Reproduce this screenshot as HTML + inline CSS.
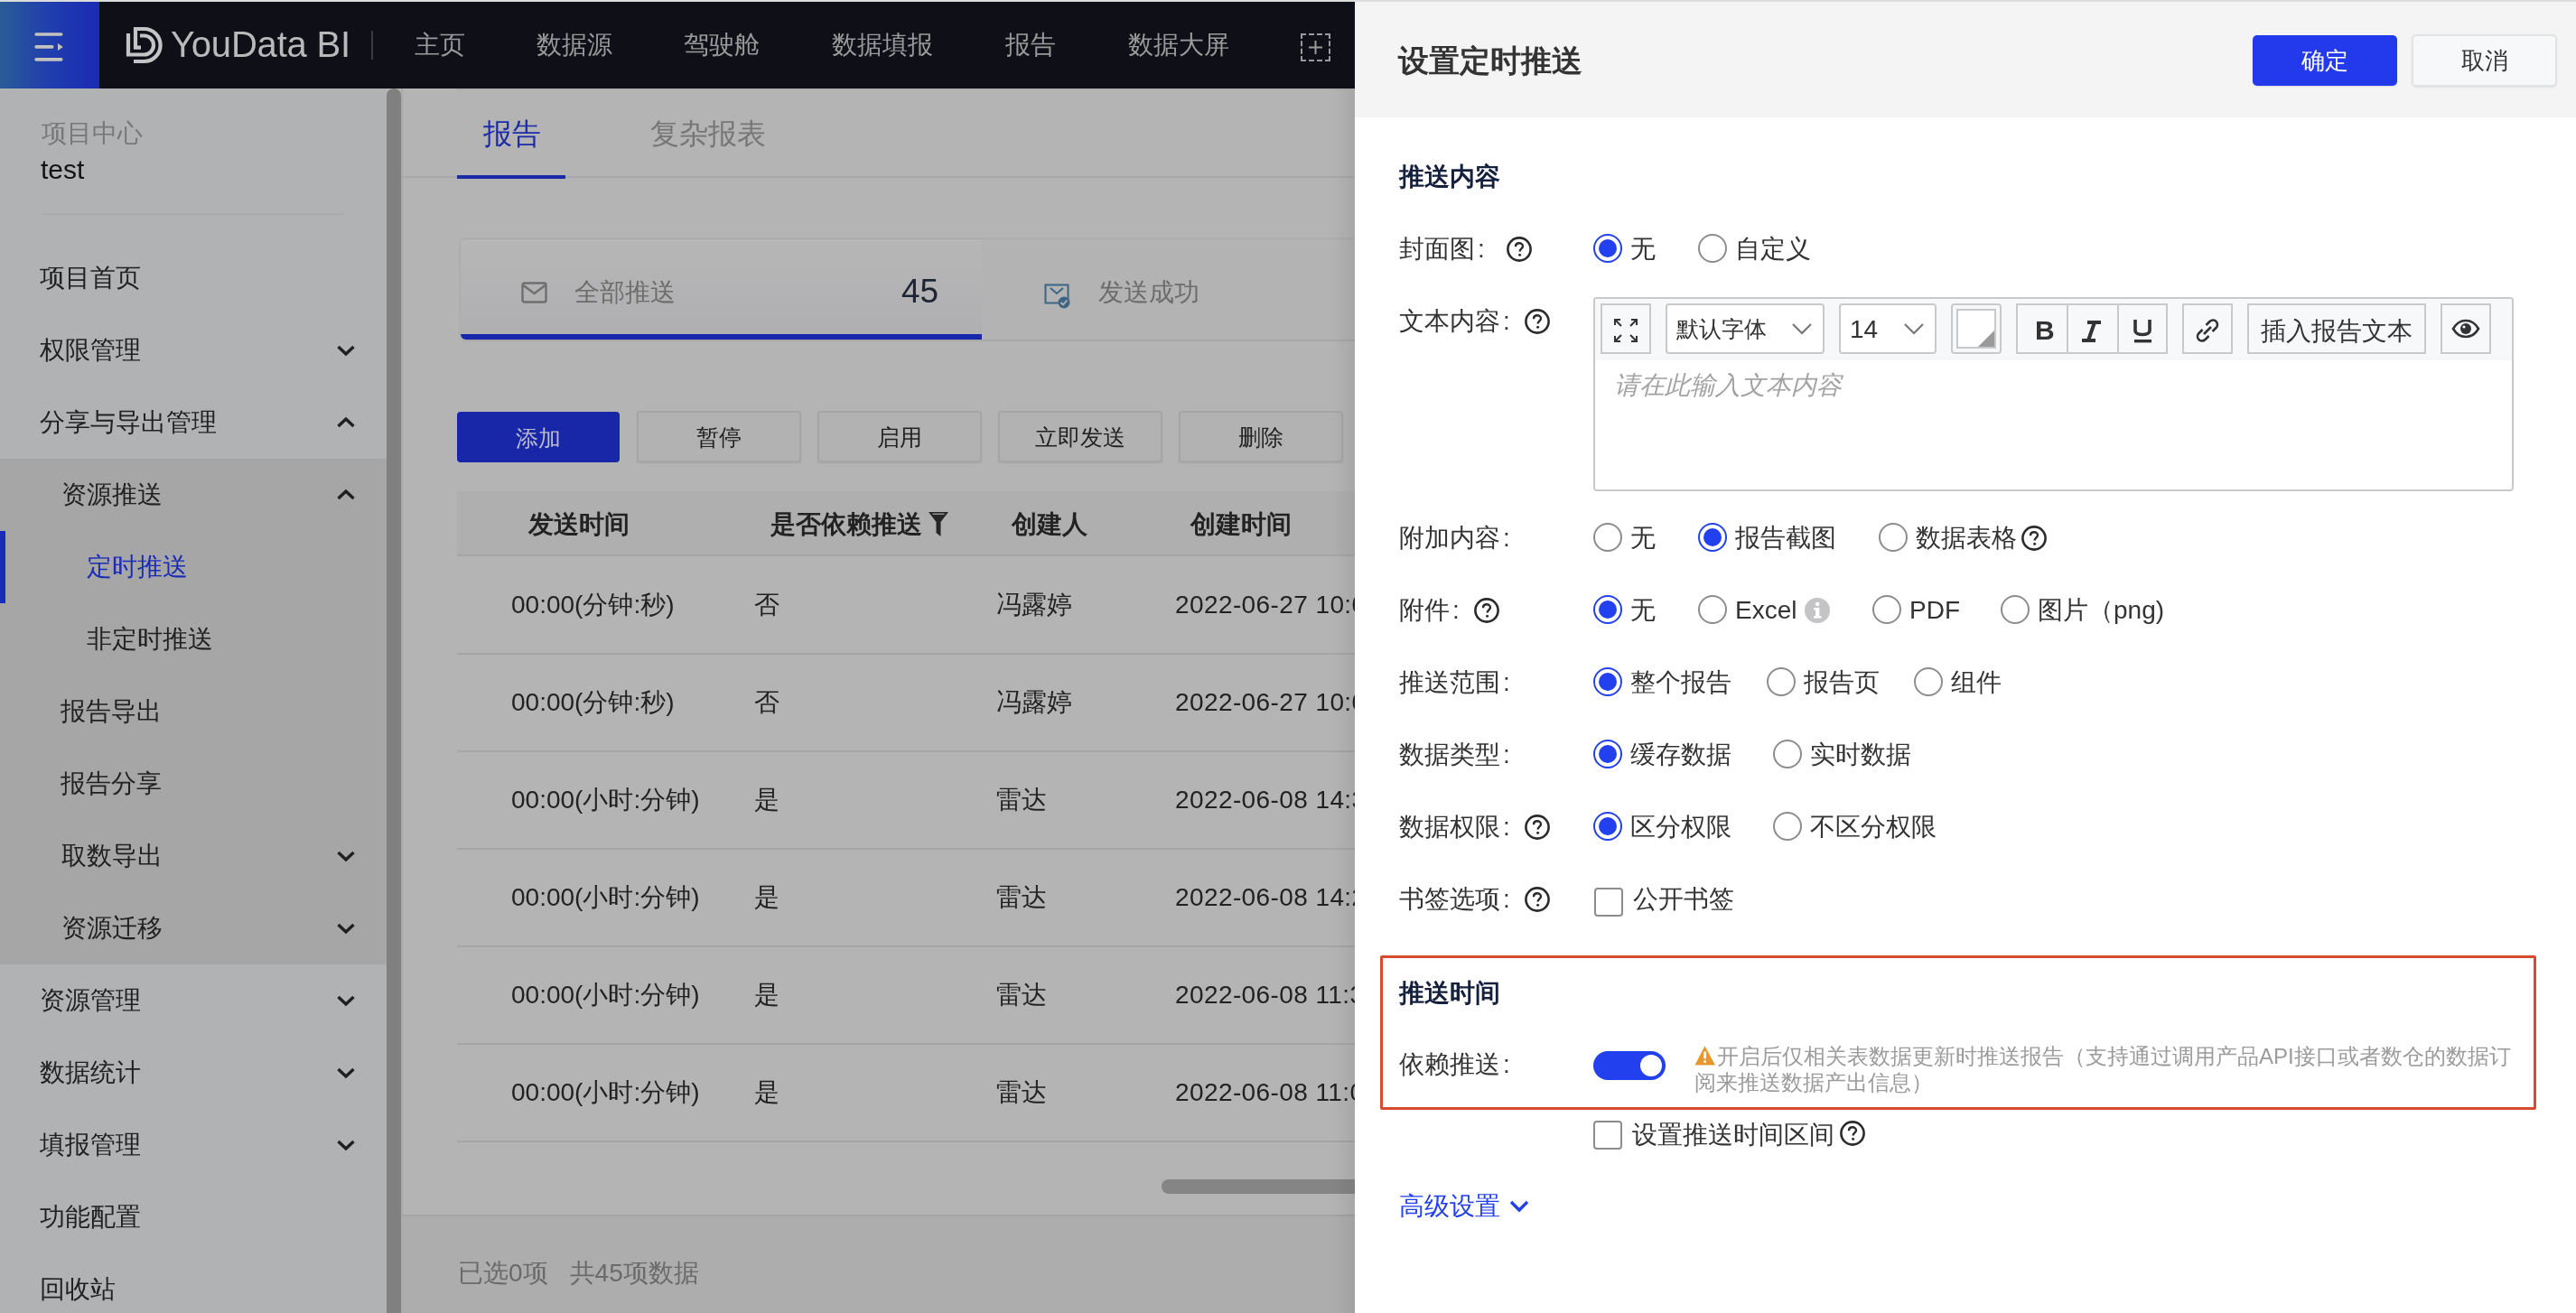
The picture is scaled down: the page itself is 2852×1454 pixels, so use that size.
<!DOCTYPE html>
<html><head><meta charset="utf-8">
<style>
html{-webkit-font-smoothing:antialiased}

*{box-sizing:border-box;margin:0;padding:0}
html,body{width:2852px;height:1454px;overflow:hidden;will-change:transform;background:#b3b3b4;font-family:"Liberation Sans",sans-serif}
.a{position:absolute;white-space:nowrap}
#topstrip{position:absolute;left:0;top:0;width:2852px;height:2px;background:#dcdcde}
#nav{position:absolute;left:0;top:2px;width:1500px;height:96px;background:#0f1017}
#burger{position:absolute;left:0;top:2px;width:110px;height:96px;background:linear-gradient(90deg,#2a5c96 0%,#2140ad 45%,#1a2ab4 100%)}
.navi{position:absolute;top:0;height:96px;line-height:96px;font-size:28px;color:#9a9a9c}
#side{position:absolute;left:0;top:98px;width:428px;height:1356px;background:#b1b2b4}
#sub{position:absolute;left:0;top:508px;width:428px;height:560px;background:#a6a6a7}
.mi{position:absolute;font-size:28px;color:#212121;line-height:40px;height:40px}
.chev{position:absolute;left:372px;width:22px;height:22px}
#sbar{position:absolute;left:428px;top:98px;width:16px;height:1356px;background:#808081;border-radius:8px 8px 0 0}
#content{position:absolute;left:444px;top:98px;width:1056px;height:1356px;background:#b4b4b4;border-left:2px solid #a9a9a9}
#panel{position:absolute;left:1500px;top:2px;width:1352px;height:1452px;background:#fff}
#phead{position:absolute;left:0;top:0;width:1352px;height:127px;background:#f4f4f4}
.lbl{position:absolute;left:49px;font-size:28px;color:#333;line-height:40px;height:40px}
.sect{position:absolute;left:49px;font-size:28px;font-weight:bold;color:#14213d;line-height:40px}
.radio{position:absolute;width:31px;height:31px;border-radius:50%;border:2px solid #8a8a8a;background:#fff}
.radio.on{border:3px solid #2439eb}
.radio.on::after{content:"";position:absolute;left:3px;top:3px;width:19px;height:19px;border-radius:50%;background:#2439eb}
.rt{position:absolute;font-size:28px;color:#333;line-height:40px}
.q{position:absolute;width:27px;height:27px;border-radius:50%;border:2.5px solid #2a2a2a;font-size:19px;line-height:22px;text-align:center;color:#2a2a2a;font-weight:bold}
.btn{position:absolute;top:455px;width:182px;height:57px;border-radius:4px;background:#b2b2b3;border:2px solid #a6a6a7;box-shadow:0 1px 2px rgba(0,0,0,0.08);color:#222;font-size:25px;line-height:55px;text-align:center}
.th{position:absolute;top:561px;font-size:28px;line-height:40px;font-weight:bold;color:#222}
.td{position:absolute;font-size:28px;line-height:40px;color:#222;white-space:nowrap}
.cb{position:absolute;width:31px;height:31px;border:2px solid #8a8a8a;border-radius:4px;background:#fff}
</style></head><body>
<div id="topstrip"></div>
<div id="nav"></div>
<div id="burger"><svg width="110" height="96" style="position:absolute;left:0;top:0"><g fill="#c4c2bd"><rect x="38.3" y="34.2" width="31.2" height="3.6" rx="1.8"/><rect x="38.3" y="48.1" width="21.2" height="3.6" rx="1.8"/><path d="M64,46 L69.8,50 L64,54 Z"/><rect x="38.3" y="62.1" width="31.2" height="3.6" rx="1.8"/></g></svg></div>
<svg style="position:absolute;left:0;top:0" width="200" height="98"><g fill="none" stroke="#c4c4c6" stroke-width="4.2"><path d="M156,52.7 H150 V32 H159.6 A18,18 0 0 1 159.6,68 H148"/><path d="M155,39.5 H159.5 A10.5,10.5 0 0 1 159.5,60.5 H142 V37"/></g></svg>
<div class="a" style="left:189px;top:26px;font-size:40px;line-height:46px;color:#b9b9bb;letter-spacing:-0.2px">YouData BI</div>
<div style="position:absolute;left:411px;top:34px;width:2px;height:32px;background:#3a3b42"></div>
<div class="navi" style="left:459px;top:2px">主页</div>
<div class="navi" style="left:594px;top:2px">数据源</div>
<div class="navi" style="left:757px;top:2px">驾驶舱</div>
<div class="navi" style="left:921px;top:2px">数据填报</div>
<div class="navi" style="left:1113px;top:2px">报告</div>
<div class="navi" style="left:1249px;top:2px">数据大屏</div>
<div style="position:absolute;left:1440px;top:37px;width:33px;height:31px;border:2px dashed #9a9a9c"></div>
<svg style="position:absolute;left:1440px;top:37px" width="33" height="31"><path d="M16.5,8 V23 M9,15.5 H24" stroke="#9a9a9c" stroke-width="2"/></svg>

<div id="side"></div>
<div id="sub"></div>
<div class="mi" style="left:46px;top:128px;color:#787879">项目中心</div>
<div class="mi" style="left:45px;top:168px;color:#141414;font-size:30px">test</div>
<div style="position:absolute;left:46px;top:236px;width:334px;height:2px;background:#a9aaac"></div>
<div style="position:absolute;left:0;top:588px;width:6px;height:80px;background:#1a2cb5"></div>
<div class="mi" style="left:44px;top:288px;color:#212121">项目首页</div>
<div class="mi" style="left:44px;top:368px;color:#212121">权限管理</div>
<svg class="chev" style="top:377px" width="22" height="22"><path d="M2.5,7 L11,15 L19.5,7" fill="none" stroke="#1f1f1f" stroke-width="3.4"/></svg>
<div class="mi" style="left:44px;top:448px;color:#212121">分享与导出管理</div>
<svg class="chev" style="top:457px" width="22" height="22"><path d="M2.5,15 L11,7 L19.5,15" fill="none" stroke="#1f1f1f" stroke-width="3.4"/></svg>
<div class="mi" style="left:68px;top:528px;color:#212121">资源推送</div>
<svg class="chev" style="top:537px" width="22" height="22"><path d="M2.5,15 L11,7 L19.5,15" fill="none" stroke="#1f1f1f" stroke-width="3.4"/></svg>
<div class="mi" style="left:96px;top:608px;color:#1a2cb5">定时推送</div>
<div class="mi" style="left:96px;top:688px;color:#212121">非定时推送</div>
<div class="mi" style="left:67px;top:768px;color:#212121">报告导出</div>
<div class="mi" style="left:67px;top:848px;color:#212121">报告分享</div>
<div class="mi" style="left:68px;top:928px;color:#212121">取数导出</div>
<svg class="chev" style="top:937px" width="22" height="22"><path d="M2.5,7 L11,15 L19.5,7" fill="none" stroke="#1f1f1f" stroke-width="3.4"/></svg>
<div class="mi" style="left:68px;top:1008px;color:#212121">资源迁移</div>
<svg class="chev" style="top:1017px" width="22" height="22"><path d="M2.5,7 L11,15 L19.5,7" fill="none" stroke="#1f1f1f" stroke-width="3.4"/></svg>
<div class="mi" style="left:44px;top:1088px;color:#212121">资源管理</div>
<svg class="chev" style="top:1097px" width="22" height="22"><path d="M2.5,7 L11,15 L19.5,7" fill="none" stroke="#1f1f1f" stroke-width="3.4"/></svg>
<div class="mi" style="left:44px;top:1168px;color:#212121">数据统计</div>
<svg class="chev" style="top:1177px" width="22" height="22"><path d="M2.5,7 L11,15 L19.5,7" fill="none" stroke="#1f1f1f" stroke-width="3.4"/></svg>
<div class="mi" style="left:44px;top:1248px;color:#212121">填报管理</div>
<svg class="chev" style="top:1257px" width="22" height="22"><path d="M2.5,7 L11,15 L19.5,7" fill="none" stroke="#1f1f1f" stroke-width="3.4"/></svg>
<div class="mi" style="left:44px;top:1328px;color:#212121">功能配置</div>
<div class="mi" style="left:44px;top:1408px;color:#212121">回收站</div>
<div id="sbar"></div>

<div id="content"></div>
<div style="position:absolute;left:506px;top:98px;width:994px;height:2px;background:#aeaeaf"></div>
<div style="position:absolute;left:446px;top:195px;width:1054px;height:2px;background:#a8a8a9"></div>
<div class="a" style="left:535px;top:126px;font-size:32px;line-height:44px;color:#1a2aa8">报告</div>
<div style="position:absolute;left:506px;top:194px;width:120px;height:4px;background:#1a2aa8"></div>
<div class="a" style="left:720px;top:126px;font-size:32px;line-height:44px;color:#767677">复杂报表</div>

<div style="position:absolute;left:510px;top:264px;width:1000px;height:112px;border-radius:6px;background:#b3b3b4;border-top:1px solid #a9a9aa;box-shadow:0 1px 3px rgba(0,0,0,0.12)"></div>
<div style="position:absolute;left:510px;top:265px;width:577px;height:111px;border-radius:6px 0 0 6px;background:linear-gradient(180deg,#b6b6b7 0%,#afafb1 100%);overflow:hidden"><div style="position:absolute;left:0;bottom:0;width:577px;height:6px;background:#1727ad"></div></div>
<svg style="position:absolute;left:577px;top:312px" width="30" height="26"><rect x="1.5" y="1.5" width="26" height="21" rx="2" fill="none" stroke="#6f6f70" stroke-width="2.4"/><path d="M2.5,4 L14.5,13 L26.5,4" fill="none" stroke="#6f6f70" stroke-width="2.4"/></svg>
<div class="a" style="left:636px;top:304px;font-size:28px;line-height:40px;color:#6c6c6d">全部推送</div>
<div class="a" style="left:998px;top:301px;font-size:37px;line-height:44px;color:#1e2433">45</div>
<svg style="position:absolute;left:1156px;top:314px" width="32" height="28"><rect x="1.5" y="1.5" width="25" height="20" fill="none" stroke="#3c6483" stroke-width="2"/><path d="M7,5 L14,11 L21,5" fill="none" stroke="#3c6483" stroke-width="2"/><circle cx="22" cy="21" r="6.5" fill="#3c6483"/><path d="M18.5,21 L21,23.5 L25.5,18.5" fill="none" stroke="#b4b4b5" stroke-width="1.8"/></svg>
<div class="a" style="left:1216px;top:304px;font-size:28px;line-height:40px;color:#6c6c6d">发送成功</div>

<div style="position:absolute;left:506px;top:456px;width:180px;height:56px;border-radius:4px;background:#1727a8;color:#b9bccc;font-size:25px;line-height:58px;text-align:center">添加</div>
<div class="btn" style="left:705px">暂停</div>
<div class="btn" style="left:905px">启用</div>
<div class="btn" style="left:1105px">立即发送</div>
<div class="btn" style="left:1305px">删除</div>

<div style="position:absolute;left:506px;top:544px;width:994px;height:72px;background:#afafb0;border-bottom:2px solid #a5a5a6"></div>
<div class="th" style="left:585px">发送时间</div>
<div class="th" style="left:853px">是否依赖推送</div>
<svg style="position:absolute;left:1027px;top:566px" width="24" height="30"><path d="M1,1 H23 L14.5,12 V28 L9.5,24 V12 Z" fill="#262626"/><path d="M5.5,3.2 H18.5" stroke="#9a9a9b" stroke-width="1.4"/></svg>
<div class="th" style="left:1120px">创建人</div>
<div class="th" style="left:1318px">创建时间</div>
<div class="td" style="left:566px;top:650px">00:00(分钟:秒)</div><div class="td" style="left:835px;top:650px">否</div><div class="td" style="left:1103px;top:650px">冯露婷</div><div class="td" style="left:1301px;top:650px;letter-spacing:0.4px">2022-06-27 10:0</div>
<div style="position:absolute;left:506px;top:723px;width:994px;height:2px;background:#a6a6a7"></div>
<div class="td" style="left:566px;top:758px">00:00(分钟:秒)</div><div class="td" style="left:835px;top:758px">否</div><div class="td" style="left:1103px;top:758px">冯露婷</div><div class="td" style="left:1301px;top:758px;letter-spacing:0.4px">2022-06-27 10:0</div>
<div style="position:absolute;left:506px;top:831px;width:994px;height:2px;background:#a6a6a7"></div>
<div class="td" style="left:566px;top:866px">00:00(小时:分钟)</div><div class="td" style="left:835px;top:866px">是</div><div class="td" style="left:1103px;top:866px">雷达</div><div class="td" style="left:1301px;top:866px;letter-spacing:0.4px">2022-06-08 14:3</div>
<div style="position:absolute;left:506px;top:939px;width:994px;height:2px;background:#a6a6a7"></div>
<div class="td" style="left:566px;top:974px">00:00(小时:分钟)</div><div class="td" style="left:835px;top:974px">是</div><div class="td" style="left:1103px;top:974px">雷达</div><div class="td" style="left:1301px;top:974px;letter-spacing:0.4px">2022-06-08 14:2</div>
<div style="position:absolute;left:506px;top:1047px;width:994px;height:2px;background:#a6a6a7"></div>
<div class="td" style="left:566px;top:1082px">00:00(小时:分钟)</div><div class="td" style="left:835px;top:1082px">是</div><div class="td" style="left:1103px;top:1082px">雷达</div><div class="td" style="left:1301px;top:1082px;letter-spacing:0.4px">2022-06-08 11:3</div>
<div style="position:absolute;left:506px;top:1155px;width:994px;height:2px;background:#a6a6a7"></div>
<div class="td" style="left:566px;top:1190px">00:00(小时:分钟)</div><div class="td" style="left:835px;top:1190px">是</div><div class="td" style="left:1103px;top:1190px">雷达</div><div class="td" style="left:1301px;top:1190px;letter-spacing:0.4px">2022-06-08 11:0</div>
<div style="position:absolute;left:506px;top:1263px;width:994px;height:2px;background:#a6a6a7"></div>
<div style="position:absolute;left:1286px;top:1306px;width:240px;height:16px;border-radius:8px;background:#858586"></div>
<div style="position:absolute;left:446px;top:1345px;width:1054px;height:2px;background:#a3a3a4"></div>
<div style="position:absolute;left:446px;top:1347px;width:1054px;height:107px;background:#adadae"></div>
<div class="a" style="left:507px;top:1390px;font-size:28px;line-height:40px;color:#6a6a6b">已选0项<span style="margin-left:24px">共45项数据</span></div>

<!--PANEL-->
<div style="position:absolute;left:1500px;top:2px;width:1352px;height:1452px;background:#fff"></div>
<div style="position:absolute;left:1500px;top:2px;width:1352px;height:128px;background:#f4f4f4"></div>
<div class="a" style="left:1548px;top:47px;font-size:34px;line-height:40px;color:#333;font-weight:bold">设置定时推送</div>
<div style="position:absolute;left:2494px;top:39px;width:160px;height:56px;border-radius:5px;background:#2339ec;box-shadow:0 1px 2px rgba(0,0,0,0.1);color:#fff;font-size:26px;line-height:56px;text-align:center">确定</div>
<div style="position:absolute;left:2670px;top:38px;width:161px;height:58px;border-radius:5px;background:#f7f8fa;border:2px solid #e2e2e4;box-shadow:0 1px 2px rgba(0,0,0,0.08);color:#333;font-size:26px;line-height:54px;text-align:center">取消</div>
<div class="a" style="left:1549px;top:176px;font-size:28px;line-height:40px;color:#14203d;font-weight:bold">推送内容</div>
<div class="a" style="left:1549px;top:256px;font-size:28px;line-height:40px;color:#333;">封面图<span style="margin-left:3px">:</span></div>
<svg style="position:absolute;left:1667px;top:261px" width="30" height="30"><circle cx="15" cy="15" r="12.6" fill="none" stroke="#2b2b2b" stroke-width="2.6"/><path d="M11,12.2 C11,9.6 12.8,8.3 15,8.3 C17.3,8.3 19,9.8 19,11.8 C19,14.4 15.6,14.6 15.6,17.6" fill="none" stroke="#2b2b2b" stroke-width="2.4"/><circle cx="15.6" cy="21.3" r="1.5" fill="#2b2b2b"/></svg>
<div style="position:absolute;left:1764px;top:259px;width:32px;height:32px;border-radius:50%;border:2.5px solid #2340ee;background:#fff"><div style="position:absolute;left:3.5px;top:3.5px;width:20px;height:20px;border-radius:50%;background:#2340ee"></div></div>
<div class="a" style="left:1805px;top:256px;font-size:28px;line-height:40px;color:#333;">无</div>
<div style="position:absolute;left:1880px;top:259px;width:32px;height:32px;border-radius:50%;border:2px solid #8c8c8c;background:#fff"></div>
<div class="a" style="left:1921px;top:256px;font-size:28px;line-height:40px;color:#333;">自定义</div>
<div class="a" style="left:1549px;top:336px;font-size:28px;line-height:40px;color:#333;">文本内容<span style="margin-left:3px">:</span></div>
<svg style="position:absolute;left:1687px;top:341px" width="30" height="30"><circle cx="15" cy="15" r="12.6" fill="none" stroke="#2b2b2b" stroke-width="2.6"/><path d="M11,12.2 C11,9.6 12.8,8.3 15,8.3 C17.3,8.3 19,9.8 19,11.8 C19,14.4 15.6,14.6 15.6,17.6" fill="none" stroke="#2b2b2b" stroke-width="2.4"/><circle cx="15.6" cy="21.3" r="1.5" fill="#2b2b2b"/></svg>
<div style="position:absolute;left:1764px;top:329px;width:1019px;height:215px;border:2px solid #c9c9c9;border-radius:4px;background:#fff;overflow:hidden">
<div style="position:absolute;left:0;top:0;width:1017px;height:68px;background:#f7f8fa"></div></div>
<div style="position:absolute;left:1772px;top:336px;width:56px;height:56px;border:2px solid #c9c9c9;border-radius:0px;background:#f7f8fa"><svg style="position:absolute;left:0;top:0" width="52" height="52"><g fill="none" stroke="#333" stroke-width="2"><path d="M14,22 V16 H20 M14,16 L21,23"/><path d="M32,16 H38 V22 M38,16 L31,23"/><path d="M14,34 V40 H20 M14,40 L21,33"/><path d="M38,34 V40 H32 M38,40 L31,33"/></g></svg></div>
<div style="position:absolute;left:1844px;top:336px;width:176px;height:56px;border:2px solid #c9c9c9;border-radius:4px;background:#fff"><div class="a" style="left:10px;top:6px;font-size:25px;line-height:40px;color:#333">默认字体</div><svg style="position:absolute;left:137px;top:18px" width="24" height="18"><path d="M2,3 L12,13 L22,3" fill="none" stroke="#777" stroke-width="2.2"/></svg></div>
<div style="position:absolute;left:2036px;top:336px;width:108px;height:56px;border:2px solid #c9c9c9;border-radius:4px;background:#fff"><div class="a" style="left:10px;top:7px;font-size:28px;line-height:40px;color:#333">14</div><svg style="position:absolute;left:69px;top:18px" width="24" height="18"><path d="M2,3 L12,13 L22,3" fill="none" stroke="#777" stroke-width="2.2"/></svg></div>
<div style="position:absolute;left:2160px;top:336px;width:56px;height:56px;border:2px solid #c9c9c9;border-radius:4px;background:#f7f8fa"><div style="position:absolute;left:4px;top:4px;width:44px;height:44px;border:2px solid #c9c9c9;background:#fff"></div><svg style="position:absolute;left:4px;top:4px" width="44" height="44"><path d="M42,24 V42 H24 Z" fill="#9a9a9a"/></svg></div>
<div style="position:absolute;left:2232px;top:336px;width:168px;height:56px;border:2px solid #c9c9c9;background:#f7f8fa"><div style="position:absolute;left:54px;top:0;width:2px;height:52px;background:#c9c9c9"></div><div style="position:absolute;left:110px;top:0;width:2px;height:52px;background:#c9c9c9"></div></div>
<div class="a" style="left:2253px;top:346px;font-size:30px;line-height:40px;font-weight:bold;color:#333">B</div>
<svg style="position:absolute;left:2290px;top:336px" width="56" height="56"><path d="M21,21 H36 M15,41 H30 M29,21 L22,41" fill="none" stroke="#333" stroke-width="4"/></svg>
<svg style="position:absolute;left:2346px;top:336px" width="56" height="56"><path d="M18,18 V30 C18,36 34,36 34,30 V18" fill="none" stroke="#333" stroke-width="3.6"/><rect x="17" y="40" width="19" height="3.4" fill="#333"/></svg>
<div style="position:absolute;left:2416px;top:336px;width:56px;height:56px;border:2px solid #c9c9c9;border-radius:0px;background:#f7f8fa"><svg style="position:absolute;left:0;top:0" width="52" height="52"><g fill="none" stroke="#333" stroke-width="2.6"><path d="M24.5,22 L28.5,18 C30.5,16 34,16 35.5,17.8 C37.5,19.8 37.5,23 35.5,25 L31.5,29"/><path d="M27.5,34 L23.5,38 C21.5,40 18,40 16.5,38.2 C14.5,36.2 14.5,33 16.5,31 L20.5,27"/><path d="M22,32 L30,24"/></g></svg></div>
<div style="position:absolute;left:2488px;top:336px;width:198px;height:56px;border:2px solid #c9c9c9;border-radius:0px;background:#f7f8fa"><div class="a" style="left:13px;top:9px;font-size:28px;line-height:40px;color:#333">插入报告文本</div></div>
<div style="position:absolute;left:2702px;top:336px;width:56px;height:56px;border:2px solid #c9c9c9;border-radius:0px;background:#f7f8fa"><svg style="position:absolute;left:0;top:0" width="52" height="52"><path d="M12,26 C16,19 21,17 26,17 C31,17 36,19 40,26 C36,33 31,35 26,35 C21,35 16,33 12,26 Z" fill="none" stroke="#333" stroke-width="2.6"/><circle cx="26" cy="26" r="6" fill="#333"/><circle cx="24" cy="24" r="1.6" fill="#f7f8fa"/></svg></div>
<div class="a" style="left:1787px;top:407px;font-size:28px;line-height:40px;color:#a3a3a3;font-style:italic">请在此输入文本内容</div>
<div class="a" style="left:1549px;top:576px;font-size:28px;line-height:40px;color:#333;">附加内容<span style="margin-left:3px">:</span></div>
<div style="position:absolute;left:1764px;top:579px;width:32px;height:32px;border-radius:50%;border:2px solid #8c8c8c;background:#fff"></div>
<div class="a" style="left:1805px;top:576px;font-size:28px;line-height:40px;color:#333;">无</div>
<div style="position:absolute;left:1880px;top:579px;width:32px;height:32px;border-radius:50%;border:2.5px solid #2340ee;background:#fff"><div style="position:absolute;left:3.5px;top:3.5px;width:20px;height:20px;border-radius:50%;background:#2340ee"></div></div>
<div class="a" style="left:1921px;top:576px;font-size:28px;line-height:40px;color:#333;">报告截图</div>
<div style="position:absolute;left:2080px;top:579px;width:32px;height:32px;border-radius:50%;border:2px solid #8c8c8c;background:#fff"></div>
<div class="a" style="left:2121px;top:576px;font-size:28px;line-height:40px;color:#333;">数据表格</div>
<svg style="position:absolute;left:2237px;top:581px" width="30" height="30"><circle cx="15" cy="15" r="12.6" fill="none" stroke="#2b2b2b" stroke-width="2.6"/><path d="M11,12.2 C11,9.6 12.8,8.3 15,8.3 C17.3,8.3 19,9.8 19,11.8 C19,14.4 15.6,14.6 15.6,17.6" fill="none" stroke="#2b2b2b" stroke-width="2.4"/><circle cx="15.6" cy="21.3" r="1.5" fill="#2b2b2b"/></svg>
<div class="a" style="left:1549px;top:656px;font-size:28px;line-height:40px;color:#333;">附件<span style="margin-left:3px">:</span></div>
<svg style="position:absolute;left:1631px;top:661px" width="30" height="30"><circle cx="15" cy="15" r="12.6" fill="none" stroke="#2b2b2b" stroke-width="2.6"/><path d="M11,12.2 C11,9.6 12.8,8.3 15,8.3 C17.3,8.3 19,9.8 19,11.8 C19,14.4 15.6,14.6 15.6,17.6" fill="none" stroke="#2b2b2b" stroke-width="2.4"/><circle cx="15.6" cy="21.3" r="1.5" fill="#2b2b2b"/></svg>
<div style="position:absolute;left:1764px;top:659px;width:32px;height:32px;border-radius:50%;border:2.5px solid #2340ee;background:#fff"><div style="position:absolute;left:3.5px;top:3.5px;width:20px;height:20px;border-radius:50%;background:#2340ee"></div></div>
<div class="a" style="left:1805px;top:656px;font-size:28px;line-height:40px;color:#333;">无</div>
<div style="position:absolute;left:1880px;top:659px;width:32px;height:32px;border-radius:50%;border:2px solid #8c8c8c;background:#fff"></div>
<div class="a" style="left:1921px;top:656px;font-size:28px;line-height:40px;color:#333;">Excel</div>
<svg style="position:absolute;left:1997px;top:661px" width="30" height="30"><circle cx="15" cy="15" r="14" fill="#c4c4c6"/><rect x="13" y="12" width="4.4" height="11" fill="#fff"/><rect x="11" y="21" width="8.5" height="2.6" fill="#fff"/><rect x="11" y="12" width="4" height="2.4" fill="#fff"/><circle cx="15.2" cy="8" r="2.3" fill="#fff"/></svg>
<div style="position:absolute;left:2073px;top:659px;width:32px;height:32px;border-radius:50%;border:2px solid #8c8c8c;background:#fff"></div>
<div class="a" style="left:2114px;top:656px;font-size:28px;line-height:40px;color:#333;">PDF</div>
<div style="position:absolute;left:2215px;top:659px;width:32px;height:32px;border-radius:50%;border:2px solid #8c8c8c;background:#fff"></div>
<div class="a" style="left:2256px;top:656px;font-size:28px;line-height:40px;color:#333;">图片（png)</div>
<div class="a" style="left:1549px;top:736px;font-size:28px;line-height:40px;color:#333;">推送范围<span style="margin-left:3px">:</span></div>
<div style="position:absolute;left:1764px;top:739px;width:32px;height:32px;border-radius:50%;border:2.5px solid #2340ee;background:#fff"><div style="position:absolute;left:3.5px;top:3.5px;width:20px;height:20px;border-radius:50%;background:#2340ee"></div></div>
<div class="a" style="left:1805px;top:736px;font-size:28px;line-height:40px;color:#333;">整个报告</div>
<div style="position:absolute;left:1956px;top:739px;width:32px;height:32px;border-radius:50%;border:2px solid #8c8c8c;background:#fff"></div>
<div class="a" style="left:1997px;top:736px;font-size:28px;line-height:40px;color:#333;">报告页</div>
<div style="position:absolute;left:2119px;top:739px;width:32px;height:32px;border-radius:50%;border:2px solid #8c8c8c;background:#fff"></div>
<div class="a" style="left:2160px;top:736px;font-size:28px;line-height:40px;color:#333;">组件</div>
<div class="a" style="left:1549px;top:816px;font-size:28px;line-height:40px;color:#333;">数据类型<span style="margin-left:3px">:</span></div>
<div style="position:absolute;left:1764px;top:819px;width:32px;height:32px;border-radius:50%;border:2.5px solid #2340ee;background:#fff"><div style="position:absolute;left:3.5px;top:3.5px;width:20px;height:20px;border-radius:50%;background:#2340ee"></div></div>
<div class="a" style="left:1805px;top:816px;font-size:28px;line-height:40px;color:#333;">缓存数据</div>
<div style="position:absolute;left:1963px;top:819px;width:32px;height:32px;border-radius:50%;border:2px solid #8c8c8c;background:#fff"></div>
<div class="a" style="left:2004px;top:816px;font-size:28px;line-height:40px;color:#333;">实时数据</div>
<div class="a" style="left:1549px;top:896px;font-size:28px;line-height:40px;color:#333;">数据权限<span style="margin-left:3px">:</span></div>
<svg style="position:absolute;left:1687px;top:901px" width="30" height="30"><circle cx="15" cy="15" r="12.6" fill="none" stroke="#2b2b2b" stroke-width="2.6"/><path d="M11,12.2 C11,9.6 12.8,8.3 15,8.3 C17.3,8.3 19,9.8 19,11.8 C19,14.4 15.6,14.6 15.6,17.6" fill="none" stroke="#2b2b2b" stroke-width="2.4"/><circle cx="15.6" cy="21.3" r="1.5" fill="#2b2b2b"/></svg>
<div style="position:absolute;left:1764px;top:899px;width:32px;height:32px;border-radius:50%;border:2.5px solid #2340ee;background:#fff"><div style="position:absolute;left:3.5px;top:3.5px;width:20px;height:20px;border-radius:50%;background:#2340ee"></div></div>
<div class="a" style="left:1805px;top:896px;font-size:28px;line-height:40px;color:#333;">区分权限</div>
<div style="position:absolute;left:1963px;top:899px;width:32px;height:32px;border-radius:50%;border:2px solid #8c8c8c;background:#fff"></div>
<div class="a" style="left:2004px;top:896px;font-size:28px;line-height:40px;color:#333;">不区分权限</div>
<div class="a" style="left:1549px;top:976px;font-size:28px;line-height:40px;color:#333;">书签选项<span style="margin-left:3px">:</span></div>
<svg style="position:absolute;left:1687px;top:981px" width="30" height="30"><circle cx="15" cy="15" r="12.6" fill="none" stroke="#2b2b2b" stroke-width="2.6"/><path d="M11,12.2 C11,9.6 12.8,8.3 15,8.3 C17.3,8.3 19,9.8 19,11.8 C19,14.4 15.6,14.6 15.6,17.6" fill="none" stroke="#2b2b2b" stroke-width="2.4"/><circle cx="15.6" cy="21.3" r="1.5" fill="#2b2b2b"/></svg>
<div style="position:absolute;left:1765px;top:983px;width:32px;height:32px;border:2px solid #8c8c8c;border-radius:4px;background:#fff"></div>
<div class="a" style="left:1808px;top:976px;font-size:28px;line-height:40px;color:#333;">公开书签</div>
<div style="position:absolute;left:1528px;top:1058px;width:1280px;height:171px;border:3px solid #d94a2e;border-radius:2px"></div>
<div class="a" style="left:1549px;top:1080px;font-size:28px;line-height:40px;color:#14203d;font-weight:bold">推送时间</div>
<div class="a" style="left:1549px;top:1159px;font-size:28px;line-height:40px;color:#333;">依赖推送<span style="margin-left:3px">:</span></div>
<div style="position:absolute;left:1764px;top:1164px;width:80px;height:32px;border-radius:16px;background:#2340ee"><div style="position:absolute;left:52px;top:4px;width:24px;height:24px;border-radius:50%;background:#fff"></div></div>
<svg style="position:absolute;left:1876px;top:1157px" width="24" height="24"><path d="M11.5,1.2 L23,22.5 H0.5 Z" fill="#e8962e"/><rect x="10.3" y="7.5" width="2.6" height="8" fill="#fff"/><rect x="10.3" y="17.3" width="2.6" height="2.6" fill="#fff"/></svg>
<div class="a" style="left:1901px;top:1155px;font-size:24px;line-height:40px;color:#9b9b9b;line-height:30px">开启后仅相关表数据更新时推送报告（支持通过调用产品API接口或者数仓的数据订</div>
<div class="a" style="left:1876px;top:1184px;font-size:24px;line-height:40px;color:#9b9b9b;line-height:30px">阅来推送数据产出信息）</div>
<div style="position:absolute;left:1764px;top:1241px;width:32px;height:32px;border:2px solid #8c8c8c;border-radius:4px;background:#fff"></div>
<div class="a" style="left:1807px;top:1237px;font-size:28px;line-height:40px;color:#333;">设置推送时间区间</div>
<svg style="position:absolute;left:2036px;top:1240px" width="30" height="30"><circle cx="15" cy="15" r="12.6" fill="none" stroke="#2b2b2b" stroke-width="2.6"/><path d="M11,12.2 C11,9.6 12.8,8.3 15,8.3 C17.3,8.3 19,9.8 19,11.8 C19,14.4 15.6,14.6 15.6,17.6" fill="none" stroke="#2b2b2b" stroke-width="2.4"/><circle cx="15.6" cy="21.3" r="1.5" fill="#2b2b2b"/></svg>
<div class="a" style="left:1549px;top:1316px;font-size:28px;line-height:40px;color:#2340ee;">高级设置</div>
<svg style="position:absolute;left:1670px;top:1325px" width="24" height="22"><path d="M3,6 L12,15 L21,6" fill="none" stroke="#2340ee" stroke-width="3.4"/></svg>
<div style="position:absolute;left:1474px;top:98px;width:26px;height:1356px;background:linear-gradient(90deg,rgba(0,0,0,0),rgba(0,0,0,0.07))"></div>
<!--/PANEL-->
</body></html>
